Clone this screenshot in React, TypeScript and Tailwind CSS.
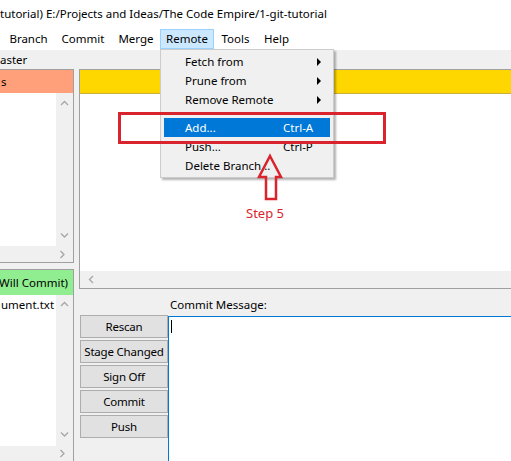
import React from "react";

const F = { fontFamily: '"Noto Sans", "Open Sans", sans-serif' };

function Chev({ dir }: { dir: "up" | "down" | "left" | "right" }) {
  const d =
    dir === "up"
      ? "M1 5 L4.5 1.5 L8 5"
      : dir === "down"
      ? "M1 1.5 L4.5 5 L8 1.5"
      : dir === "left"
      ? "M5 1 L1.5 4.5 L5 8"
      : "M1.5 1 L5 4.5 L1.5 8";
  const w = dir === "up" || dir === "down" ? 9 : 7;
  const h = dir === "up" || dir === "down" ? 7 : 9;
  return (
    <svg width={w} height={h} viewBox={`0 0 ${w} ${h}`}>
      <path d={d} fill="none" stroke="#a6a6a6" strokeWidth="1.3" />
    </svg>
  );
}

function MenuItem({ label, shortcut, arrow, active }: { label: string; shortcut?: string; arrow?: boolean; active?: boolean }) {
  return (
    <div
      className={`h-[19px] mx-[3px] flex items-center pl-[21px] pr-[8px] ${active ? "bg-[#0078d7] text-white" : "text-black"}`}
    >
      <span className="w-[98px] whitespace-nowrap">{label}</span>
      <span className="flex-1 whitespace-nowrap">{shortcut}</span>
      {arrow && (
        <svg width="5" height="8" viewBox="0 0 5 8">
          <path d="M0 0 L4 4 L0 8 Z" fill="#000" />
        </svg>
      )}
    </div>
  );
}

export default function App() {
  return (
    <div className="w-[511px] h-[461px] relative overflow-hidden bg-[#f0f0f0] text-[11.5px] text-black" style={F}>
      {/* title */}
      <div className="h-[29px] bg-white flex items-center whitespace-nowrap pb-[1px]">
        tutorial) E:/Projects and Ideas/The Code Empire/1-git-tutorial
      </div>
      {/* menubar */}
      <div className="h-[21px] bg-white flex items-stretch pl-[3px] pb-[1px]">
        <div className="w-[51px] flex items-center justify-center">Branch</div>
        <div className="w-[58px] flex items-center justify-center">Commit</div>
        <div className="w-[48px] flex items-center justify-center">Merge</div>
        <div className="w-[54px] flex items-center justify-center bg-[#cce8ff] border border-[#99d1ff]">Remote</div>
        <div className="w-[43px] flex items-center justify-center">Tools</div>
        <div className="w-[39px] flex items-center justify-center">Help</div>
      </div>
      {/* branch row */}
      <div className="h-[19px] flex items-center whitespace-nowrap">aster</div>
      {/* main */}
      <div className="h-[392px] flex">
        {/* left column */}
        <div className="w-[74px] flex flex-col gap-[6px]">
          <div className="h-[194px] flex flex-col border-t border-r border-b border-[#a0a0a0]">
            <div className="h-[23px] bg-[#ffa07a] flex items-center pl-[1px]">s</div>
            <div className="flex-1 flex bg-white">
              <div className="flex-1" />
              <div className="w-[17px] bg-[#f0f0f0] flex flex-col items-center justify-between py-[7px]">
                <Chev dir="up" />
                <Chev dir="down" />
              </div>
            </div>
            <div className="h-[16px] bg-[#f0f0f0] flex items-center justify-end pr-[7px]">
              <Chev dir="right" />
            </div>
          </div>
          <div className="flex-1 flex flex-col border-t border-r border-[#a0a0a0]">
            <div className="h-[25px] bg-[#90ee90] flex items-center justify-end pr-[5px] whitespace-nowrap overflow-hidden">Will Commit)</div>
            <div className="flex-1 flex bg-white">
              <div className="flex-1 pl-[1px] pt-[1px] whitespace-nowrap">ument.txt</div>
              <div className="w-[17px] bg-[#f0f0f0] flex flex-col items-center justify-between pt-[6px] pb-[8px]">
                <Chev dir="up" />
                <Chev dir="down" />
              </div>
            </div>
            <div className="h-[15px] bg-[#f0f0f0] flex items-center justify-end pr-[7px]">
              <Chev dir="right" />
            </div>
          </div>
        </div>
        {/* right column */}
        <div className="flex-1 ml-[5px] flex flex-col">
          <div className="h-[220px] flex flex-col border-l border-t border-b border-[#a0a0a0]">
            <div className="h-[24px] bg-[#ffd700] border-b border-[#c8b040]" />
            <div className="flex-1 bg-white" />
            <div className="h-[17px] bg-[#f0f0f0] flex items-center pl-[8px]">
              <Chev dir="left" />
            </div>
          </div>
          <div className="flex-1 flex">
            <div className="w-[89px] pl-[1px] pt-[26px] flex flex-col gap-[2px]">
              {["Rescan", "Stage Changed", "Sign Off", "Commit", "Push"].map((b) => (
                <div
                  key={b}
                  className="h-[23px] bg-[#e1e1e1] border border-[#adadad] flex items-center justify-center whitespace-nowrap tracking-[-0.2px]"
                >
                  {b}
                </div>
              ))}
            </div>
            <div className="flex-1 flex flex-col">
              <div className="h-[27px] flex items-center pl-[2px] pt-[5px]">Commit Message:</div>
              <div className="flex-1 bg-white border-t border-l border-[#0078d7] pl-[2px] pt-[3px]">
                <div className="w-[1px] h-[13px] bg-black" />
              </div>
            </div>
          </div>
        </div>
      </div>

      {/* dropdown menu */}
      <div className="absolute left-[160px] top-[49px] w-[174px] bg-[#f0f0f0] border border-[#cccccc] shadow-[2px_2px_2px_rgba(0,0,0,0.3)] pt-[2px] pb-[2px]">
        <MenuItem label="Fetch from" arrow />
        <MenuItem label="Prune from" arrow />
        <MenuItem label="Remove Remote" arrow />
        <div className="h-[9px] flex items-center mx-[3px] pl-[24px]">
          <div className="flex-1 h-[1px] bg-[#d7d7d7]" />
        </div>
        <MenuItem label="Add..." shortcut="Ctrl-A" active />
        <MenuItem label="Push..." shortcut="Ctrl-P" />
        <MenuItem label="Delete Branch..." />
      </div>

      {/* red annotation rectangle */}
      <div className="absolute left-[118px] top-[112px] w-[268px] h-[32px] border-[3px] border-[#d9242e]" />
      {/* red arrow */}
      <svg className="absolute left-[255px] top-[152px]" width="30" height="52" viewBox="0 0 30 52">
        <path
          d="M15 4 L26 25 L21 25 L21 47 L11 47 L11 25 L4 25 Z"
          fill="none"
          stroke="#d9242e"
          strokeWidth="2.5"
          strokeLinejoin="miter"
        />
      </svg>
      <div className="absolute left-[246px] top-[204px] text-[13px] text-[#d9242e] whitespace-nowrap">Step 5</div>
    </div>
  );
}
